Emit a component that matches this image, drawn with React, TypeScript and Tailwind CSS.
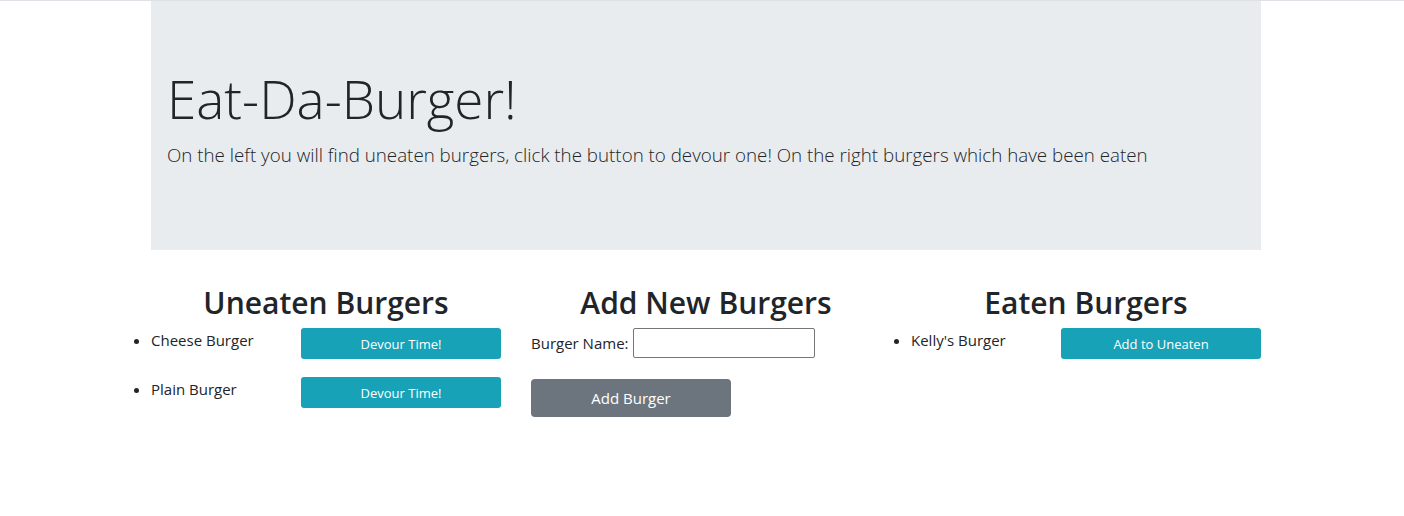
import React from "react";

const font = { fontFamily: '"Open Sans", "Noto Sans", sans-serif' };

function Item({ name, label }: { name: string; label: string }) {
  return (
    <li className="flex items-start justify-between list-disc">
      <span className="text-[15px] leading-6 list-item">{name}</span>
      <button className="w-[200px] h-[31px] rounded-[3px] bg-[#17a2b8] text-white text-[13px] leading-[33px]">
        {label}
      </button>
    </li>
  );
}

export default function App() {
  return (
    <div className="min-h-[516px] bg-white border-t border-[#dee2e6] text-[#212529]" style={font}>
      <div className="w-[1110px] ml-[151px]">
        <div className="bg-[#e9ecef] px-4 py-16 mb-8">
          <h1 className="text-[53px] font-light leading-[67px] mb-2">Eat-Da-Burger!</h1>
          <p className="text-[18.75px] font-light leading-[30px] mb-4">
            On the left you will find uneaten burgers, click the button to devour one! On the right burgers which have been eaten
          </p>
        </div>
        <div className="grid grid-cols-3 gap-[30px]">
          <div>
            <h2 className="text-center text-[30px] font-semibold leading-[38px] pt-[2px] mb-[6px]">Uneaten Burgers</h2>
            <ul className="flex flex-col gap-[18px] list-disc">
              <Item name="Cheese Burger" label="Devour Time!" />
              <Item name="Plain Burger" label="Devour Time!" />
            </ul>
          </div>
          <div>
            <h2 className="text-center text-[30px] font-semibold leading-[38px] pt-[2px] mb-[6px]">Add New Burgers</h2>
            <div className="flex items-center h-[30px]">
              <span className="text-[15px] mr-[4px]">Burger Name:</span>
              <input className="w-[182px] h-[30px] border border-[#767676] rounded-[2px]" />
            </div>
            <button className="mt-[21px] w-[200px] h-[38px] rounded-[4px] bg-[#6c757d] text-white text-[15px]">
              Add Burger
            </button>
          </div>
          <div>
            <h2 className="text-center text-[30px] font-semibold leading-[38px] pt-[2px] mb-[6px]">Eaten Burgers</h2>
            <ul className="flex flex-col gap-[18px] list-disc">
              <Item name="Kelly's Burger" label="Add to Uneaten" />
            </ul>
          </div>
        </div>
      </div>
    </div>
  );
}
